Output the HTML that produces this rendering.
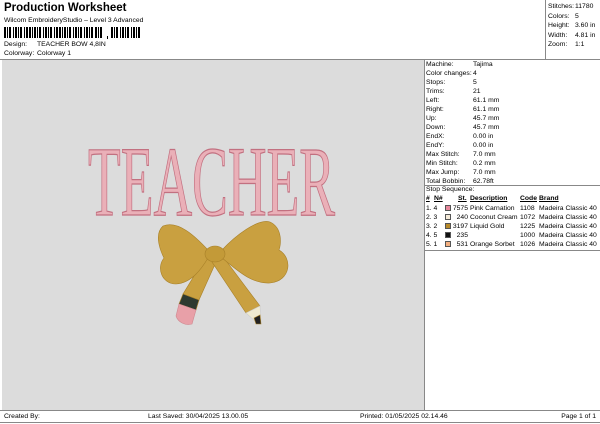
<!DOCTYPE html>
<html><head><meta charset="utf-8"><style>
*{margin:0;padding:0;box-sizing:border-box}
body{width:600px;height:424px;background:#fff;font-family:"Liberation Sans",sans-serif;font-size:6.8px;color:#000;position:relative;overflow:hidden}
.a{position:absolute;white-space:nowrap}
.l{position:absolute;background:#888}
</style></head><body>
<div class="a" style="left:4px;top:2px;font-size:11.5px;font-weight:bold">Production Worksheet</div>
<div class="a" style="left:4px;top:17px">Wilcom EmbroideryStudio – Level 3 Advanced</div>
<svg class="a" style="left:4px;top:27px" width="140" height="13">
<g fill="#000">
<rect x="0" y="0" width="2" height="11"/><rect x="3" y="0" width="1" height="11"/><rect x="5" y="0" width="2" height="11"/><rect x="9" y="0" width="1" height="11"/><rect x="11" y="0" width="2" height="11"/><rect x="14" y="0" width="1" height="11"/><rect x="16" y="0" width="2" height="11"/><rect x="20" y="0" width="1" height="11"/><rect x="22" y="0" width="2" height="11"/><rect x="25" y="0" width="2" height="11"/><rect x="28" y="0" width="1" height="11"/><rect x="30" y="0" width="2" height="11"/><rect x="33" y="0" width="1" height="11"/><rect x="35" y="0" width="2" height="11"/><rect x="39" y="0" width="1" height="11"/><rect x="41" y="0" width="2" height="11"/><rect x="44" y="0" width="1" height="11"/><rect x="46" y="0" width="2" height="11"/><rect x="50" y="0" width="1" height="11"/><rect x="52" y="0" width="2" height="11"/><rect x="55" y="0" width="2" height="11"/><rect x="58" y="0" width="1" height="11"/><rect x="60" y="0" width="2" height="11"/><rect x="63" y="0" width="1" height="11"/><rect x="65" y="0" width="2" height="11"/><rect x="69" y="0" width="1" height="11"/><rect x="71" y="0" width="2" height="11"/><rect x="74" y="0" width="1" height="11"/><rect x="76" y="0" width="2" height="11"/><rect x="80" y="0" width="1" height="11"/><rect x="82" y="0" width="2" height="11"/><rect x="85" y="0" width="1" height="11"/><rect x="87" y="0" width="2" height="11"/><rect x="91" y="0" width="2" height="11"/><rect x="94" y="0" width="1" height="11"/><rect x="96" y="0" width="2" height="11"/>
<rect x="103" y="9" width="1" height="3"/>
<rect x="107" y="0" width="2" height="11"/><rect x="110" y="0" width="1" height="11"/><rect x="112" y="0" width="2" height="11"/><rect x="116" y="0" width="1" height="11"/><rect x="118" y="0" width="2" height="11"/><rect x="121" y="0" width="1" height="11"/><rect x="123" y="0" width="2" height="11"/><rect x="127" y="0" width="1" height="11"/><rect x="129" y="0" width="2" height="11"/><rect x="132" y="0" width="1" height="11"/><rect x="134" y="0" width="2" height="11"/>
</g></svg>
<div class="a" style="left:4px;top:41px">Design:</div><div class="a" style="left:37px;top:41px">TEACHER BOW 4,8IN</div>
<div class="a" style="left:4px;top:50px">Colorway:</div><div class="a" style="left:37px;top:50px">Colorway 1</div>

<div class="l" style="left:545px;top:0;width:1px;height:59px"></div>
<div class="a" style="left:548px;top:2px;line-height:9.5px">Stitches:<br>Colors:<br>Height:<br>Width:<br>Zoom:</div>
<div class="a" style="left:575px;top:2px;line-height:9.5px">11780<br>5<br>3.60 in<br>4.81 in<br>1:1</div>

<div class="l" style="left:0;top:59px;width:600px;height:1px"></div>
<div class="a" style="left:2px;top:60px;width:422px;height:350px;background:#dcdcdc"></div>
<div class="l" style="left:424px;top:60px;width:1px;height:350px"></div>

<svg class="a" style="left:2px;top:60px" width="422" height="350" viewBox="2 60 422 350">
<text x="88" y="218" textLength="247" lengthAdjust="spacingAndGlyphs" font-family="Liberation Serif,serif" font-size="100" fill="#eab0b8" stroke="#c27080" stroke-width="1.2" transform="translate(0,-3)">TEACHER</text>
<g stroke="#a88028" stroke-width="0.6">
<path d="M205,258 L216,262 L199,300 L183,294 Z" fill="#c9a040"/>
<path d="M183,294 L199,300 L196,310 L179,304 Z" fill="#2e3a30"/>
<path d="M179,304 L196,310 L192,324 C185,326 178,322 176,316 Z" fill="#e8a0a8" stroke="#d08890"/>
<path d="M212,262 L224,258 L260,306 L246,313 Z" fill="#c9a040"/>
<path d="M246,313 L260,306 L261,322 L256,322 Z" fill="#f0ead0" stroke="#ccc"/>
<path d="M254,318 L260,315 L261,324 L256,324 Z" fill="#222"/>
<path d="M208,250 C195,236 178,220 163,226 C154,234 160,250 164,258 C156,268 162,284 176,284 C192,283 202,268 208,258 Z" fill="#c9a040"/>
<path d="M222,250 C235,236 258,218 270,222 C283,228 281,245 279,250 C293,258 291,281 270,283 C250,284 235,268 222,258 Z" fill="#c9a040"/>
<ellipse cx="215" cy="254" rx="10" ry="8" fill="#c39a38"/>
</g>
</svg>

<div class="a" style="left:426px;top:60px;line-height:9px">Machine:<br>Color changes:<br>Stops:<br>Trims:<br>Left:<br>Right:<br>Up:<br>Down:<br>EndX:<br>EndY:<br>Max Stitch:<br>Min Stitch:<br>Max Jump:<br>Total Bobbin:</div>
<div class="a" style="left:473px;top:60px;line-height:9px">Tajima<br>4<br>5<br>21<br>61.1 mm<br>61.1 mm<br>45.7 mm<br>45.7 mm<br>0.00 in<br>0.00 in<br>7.0 mm<br>0.2 mm<br>7.0 mm<br>62.78ft</div>
<div class="l" style="left:425px;top:185px;width:175px;height:1px"></div>
<div class="a" style="left:426px;top:186px">Stop Sequence:</div>
<div class="a" style="left:426px;top:195px;font-weight:bold;text-decoration:underline">#</div>
<div class="a" style="left:434px;top:195px;font-weight:bold;text-decoration:underline">N#</div>
<div class="a" style="left:458px;top:195px;font-weight:bold;text-decoration:underline">St.</div>
<div class="a" style="left:470px;top:195px;font-weight:bold;text-decoration:underline">Description</div>
<div class="a" style="left:520px;top:195px;font-weight:bold;text-decoration:underline">Code</div>
<div class="a" style="left:539px;top:195px;font-weight:bold;text-decoration:underline">Brand</div>
<div class="a" style="left:426px;top:204px;line-height:9px">1. 4<br>2. 3<br>3. 2<br>4. 5<br>5. 1</div>
<div class="a" style="left:445px;top:205px;width:6px;height:6px;background:#e8889c;border:1px solid #555"></div>
<div class="a" style="left:445px;top:214px;width:6px;height:6px;background:#f4ead8;border:1px solid #555"></div>
<div class="a" style="left:445px;top:223px;width:6px;height:6px;background:#b88a2a;border:1px solid #555"></div>
<div class="a" style="left:445px;top:232px;width:6px;height:6px;background:#111;border:1px solid #555"></div>
<div class="a" style="left:445px;top:241px;width:6px;height:6px;background:#f4b080;border:1px solid #555"></div>
<div class="a" style="left:451px;top:204px;line-height:9px;width:17px;text-align:right">7575<br>240<br>3197<br>235<br>531</div>
<div class="a" style="left:470px;top:204px;line-height:9px">Pink Carnation<br>Coconut Cream<br>Liquid Gold<br><br>Orange Sorbet</div>
<div class="a" style="left:520px;top:204px;line-height:9px">1108<br>1072<br>1225<br>1000<br>1026</div>
<div class="a" style="left:539px;top:204px;line-height:9px">Madeira Classic 40<br>Madeira Classic 40<br>Madeira Classic 40<br>Madeira Classic 40<br>Madeira Classic 40</div>
<div class="l" style="left:425px;top:250px;width:175px;height:1px"></div>

<div class="l" style="left:0;top:410px;width:600px;height:1px"></div>
<div class="a" style="left:4px;top:413px">Created By:</div>
<div class="a" style="left:148px;top:413px">Last Saved: 30/04/2025 13.00.05</div>
<div class="a" style="left:360px;top:413px">Printed: 01/05/2025 02.14.46</div>
<div class="a" style="right:4px;top:413px">Page 1 of 1</div>
<div class="l" style="left:0;top:422px;width:600px;height:1px"></div>
</body></html>
